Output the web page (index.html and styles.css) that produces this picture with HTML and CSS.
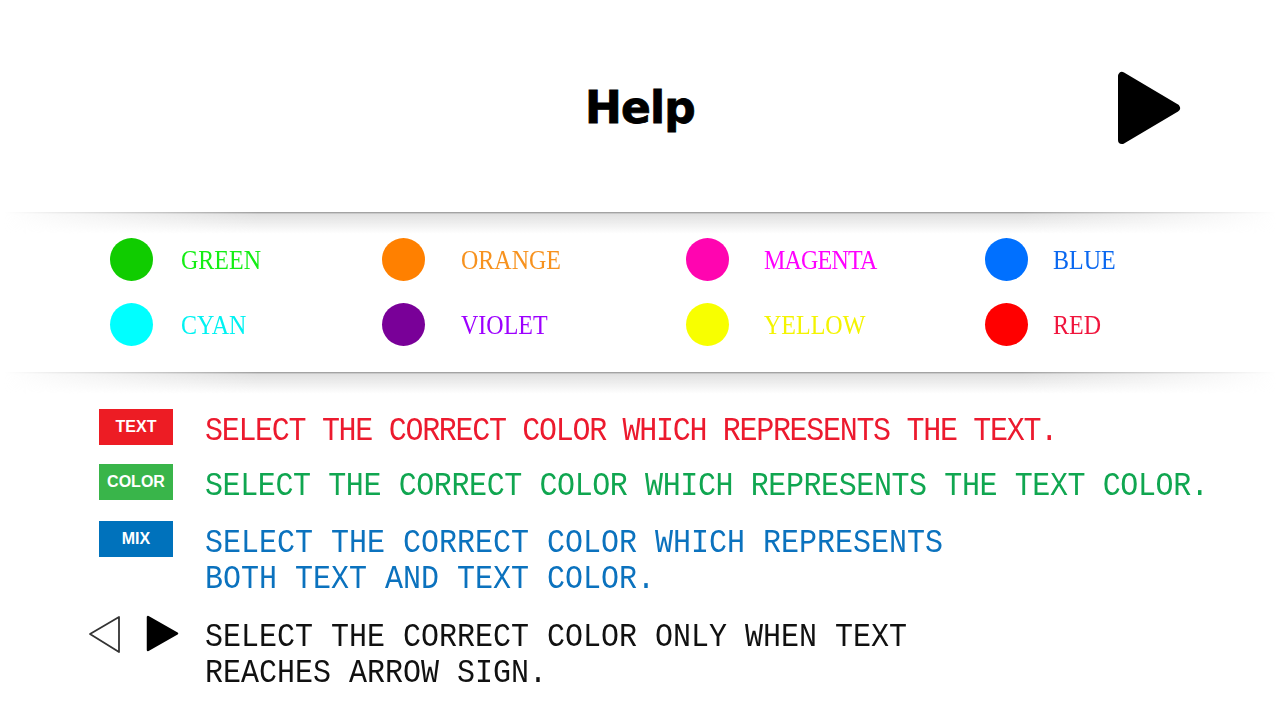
FILE: index.html
```html
<!DOCTYPE html>
<html lang="en">
<head>
<meta charset="utf-8">
<title>Help</title>
<link rel="stylesheet" href="styles.css">
</head>
<body>
<header class="top">
  <h1 class="title">Help</h1>
  <button class="play" aria-label="Play">
    <svg width="64" height="74" viewBox="0 0 64 74"><polygon points="5,5 5,69 59,37" fill="#000" stroke="#000" stroke-width="8" stroke-linejoin="round"/></svg>
  </button>
</header>

<section class="palette">
  <div class="swatch"><span class="dot d-green"></span><span class="name n-green">GREEN</span></div>
  <div class="swatch"><span class="dot d-orange"></span><span class="name n-orange">ORANGE</span></div>
  <div class="swatch"><span class="dot d-magenta"></span><span class="name n-magenta">MAGENTA</span></div>
  <div class="swatch"><span class="dot d-blue"></span><span class="name n-blue">BLUE</span></div>
  <div class="swatch"><span class="dot d-cyan"></span><span class="name n-cyan">CYAN</span></div>
  <div class="swatch"><span class="dot d-violet"></span><span class="name n-violet">VIOLET</span></div>
  <div class="swatch"><span class="dot d-yellow"></span><span class="name n-yellow">YELLOW</span></div>
  <div class="swatch"><span class="dot d-red"></span><span class="name n-red">RED</span></div>
</section>

<section class="rules">
  <div class="rule">
    <span class="badge b-text">TEXT</span>
    <p class="desc desc-text">SELECT THE CORRECT COLOR WHICH REPRESENTS THE TEXT.</p>
  </div>
  <div class="rule">
    <span class="badge b-color">COLOR</span>
    <p class="desc desc-color">SELECT THE CORRECT COLOR WHICH REPRESENTS THE TEXT COLOR.</p>
  </div>
  <div class="rule rule-mix">
    <span class="badge b-mix">MIX</span>
    <p class="desc desc-mix">SELECT THE CORRECT COLOR WHICH REPRESENTS<br>BOTH TEXT AND TEXT COLOR.</p>
  </div>
  <div class="rule rule-arrows">
    <svg class="arrows" width="92" height="40" viewBox="0 0 92 40">
      <polygon points="2,19 31,2 31,37" fill="none" stroke="#333" stroke-width="1.8" stroke-linejoin="round"/>
      <polygon points="60,2 60,35 89,18.5" fill="#000" stroke="#000" stroke-width="2.5" stroke-linejoin="round"/>
    </svg>
    <p class="desc desc-arrow">SELECT THE CORRECT COLOR ONLY WHEN TEXT<br>REACHES ARROW SIGN.</p>
  </div>
</section>
</body>
</html>
```

FILE: styles.css
```css
* { box-sizing: border-box; }
html, body { margin: 0; background: #fff; }
body {
  width: 1280px;
  height: 720px;
  overflow: hidden;
  font-family: "Liberation Sans", Arial, sans-serif;
}

/* header */
.top {
  height: 212px;
  padding-top: 4px;
  display: grid;
  grid-template-columns: 1fr auto 1fr;
  align-items: center;
}
.title {
  grid-column: 2;
  margin: 0;
  font: bold 44px/52px "DejaVu Sans", sans-serif;
  letter-spacing: -0.8px;
  color: #000;
  -webkit-text-stroke: 0.8px #000;
}
.play {
  grid-column: 3;
  justify-self: end;
  margin-right: 99px;
  width: 64px;
  height: 74px;
  padding: 0;
  border: 0;
  background: none;
  display: block;
}
.play svg { display: block; }

/* palette band */
.palette {
  position: relative;
  height: 160px;
  padding: 26px 0 0 110px;
  display: grid;
  grid-template-columns: 272px 304px 299px 1fr;
  grid-auto-rows: 43px;
  row-gap: 22px;
}
.palette::before,
.palette::after {
  content: "";
  position: absolute;
  left: 4px;
  right: 4px;
  height: 22px;
  background: linear-gradient(to bottom, #969696 0, #b0b0b0 1px, #e0e0e0 2px, rgba(255,255,255,0) 100%);
  -webkit-mask-image: linear-gradient(to right, transparent 0, #000 20%, #000 80%, transparent 100%);
  mask-image: linear-gradient(to right, transparent 0, #000 20%, #000 80%, transparent 100%);
  pointer-events: none;
}
.palette::before { top: 0; }
.palette::after { top: 100%; }

.swatch {
  display: flex;
  align-items: center;
  gap: 28px;
}
.swatch:nth-child(4n+2) { gap: 36px; }
.swatch:nth-child(4n+3) { gap: 35px; }
.swatch:nth-child(4n) { gap: 25px; }

.dot {
  flex: none;
  width: 43px;
  height: 43px;
  border-radius: 50%;
}
.name {
  font: 24px/1 "Liberation Serif", "Times New Roman", serif;
  transform: scaleY(1.13);
}
.n-magenta { letter-spacing: -0.8px; }

.d-green { background: #10cc00; }
.d-orange { background: #ff8000; }
.d-magenta { background: #ff05b0; }
.d-blue { background: #0070ff; }
.d-cyan { background: #00ffff; }
.d-violet { background: #790098; }
.d-yellow { background: #f8ff00; }
.d-red { background: #ff0000; }

.n-green { color: #14ee14; }
.n-orange { color: #f7921e; }
.n-magenta { color: #ff00ff; }
.n-blue { color: #0a68f0; }
.n-cyan { color: #00f2f2; }
.n-violet { color: #9d00ff; }
.n-yellow { color: #f4f400; }
.n-red { color: #f0143c; }

/* rules */
.rules {
  padding: 37px 0 0 99px;
  display: flex;
  flex-direction: column;
}
.rule {
  display: grid;
  grid-template-columns: 74px 1fr;
  column-gap: 32px;
  align-items: start;
}
.rule + .rule { margin-top: 19px; }
.rule.rule-mix { margin-top: 21px; }
.rule.rule-arrows { margin-top: 26px; }

.badge {
  height: 36px;
  display: flex;
  align-items: center;
  justify-content: center;
  color: #fff;
  font: bold 16px/1 "Liberation Sans", Arial, sans-serif;
}
.b-text { background: #ed1c24; }
.b-color { background: #39b54a; }
.b-mix { background: #0072bc; }

.arrows {
  display: block;
  margin-left: -11px;
}

.desc {
  margin: 4px 0 0;
  font: 30px/32px "Liberation Mono", "DejaVu Sans Mono", monospace;
  white-space: nowrap;
  transform: scaleY(1.13);
  transform-origin: 0 0;
}
.desc-text { color: #ec1a2e; letter-spacing: -1.3px; }
.desc-color { color: #10a650; letter-spacing: -0.4px; }
.desc-mix { color: #0b72be; }
.desc-arrow { color: #111; }
```
